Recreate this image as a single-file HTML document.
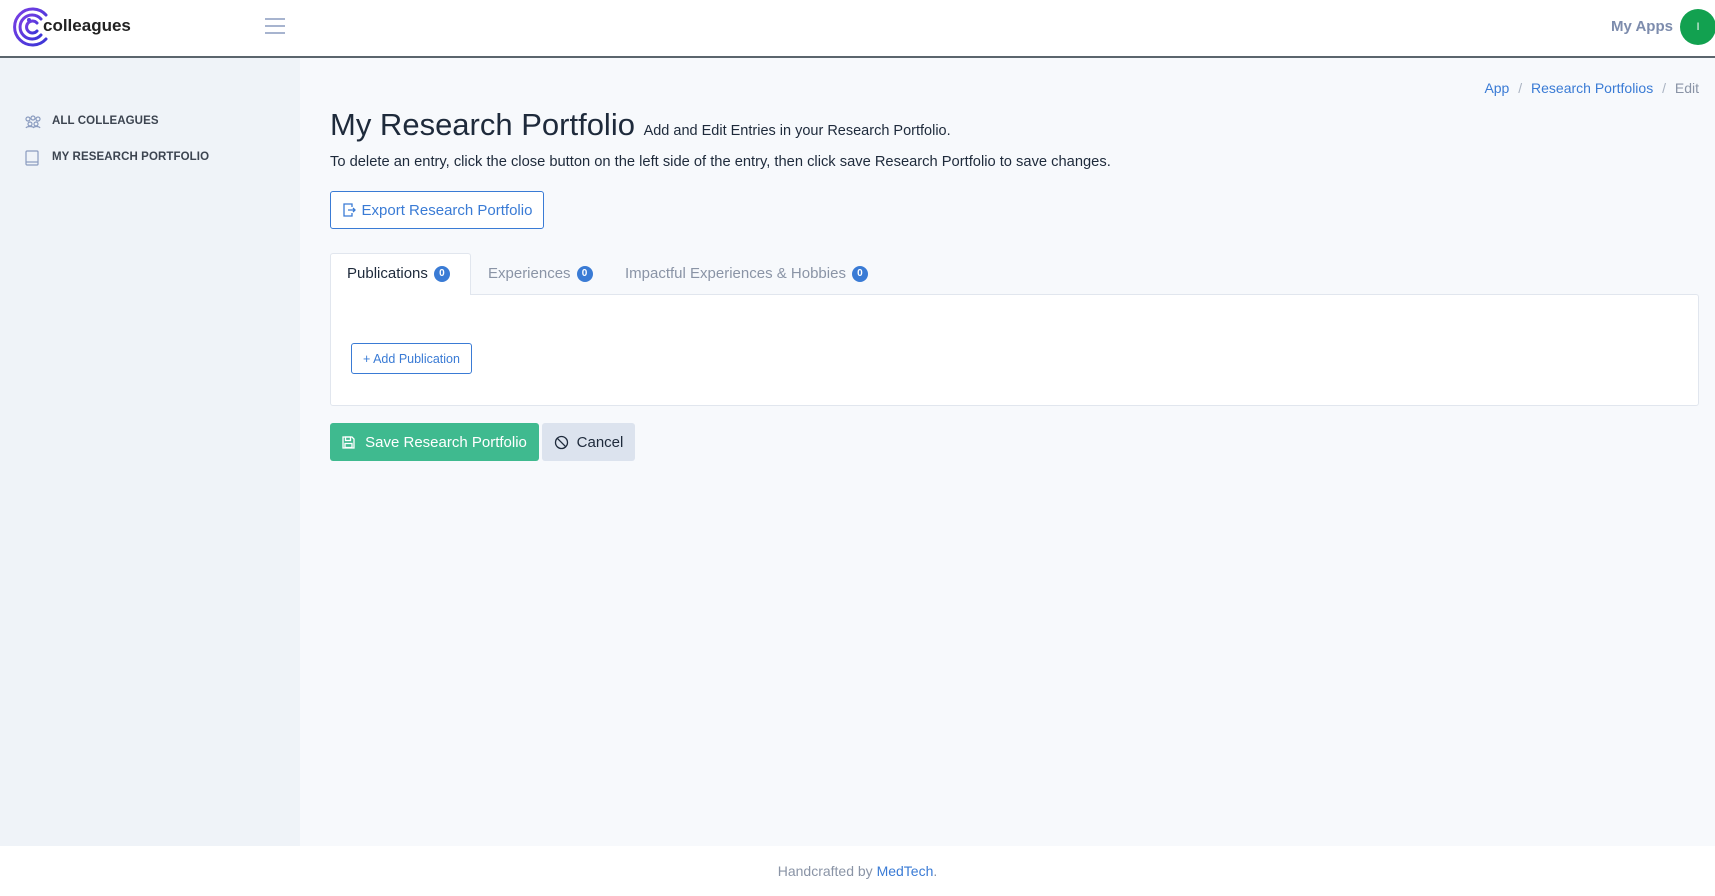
<!DOCTYPE html>
<html><head><meta charset="utf-8"><style>
*{box-sizing:border-box;margin:0;padding:0}
body{width:1715px;height:896px;overflow:hidden;font-family:"Liberation Sans",sans-serif;background:#f7f9fc;position:relative;color:#1e2a3b}
.hdr{position:absolute;left:0;top:0;width:1715px;height:58px;background:#fff;border-bottom:2px solid #5b656d}
.side{position:absolute;left:0;top:58px;width:300px;height:788px;background:#eff3f8}
.foot{position:absolute;left:0;top:846px;width:1715px;height:50px;background:#fff;text-align:center;font-size:14px;color:#8a94a6;line-height:50px}
.foot a{color:#3a7bd5;text-decoration:none}
.abs{position:absolute}
.nav{font-size:11.5px;font-weight:bold;color:#3c4450;letter-spacing:.1px}
.btn{position:absolute;border-radius:3px;font-size:15px;display:flex;align-items:center;justify-content:center}
.badge{display:inline-block;width:16px;height:16px;border-radius:8px;background:#3a7bd5;color:#fff;font-size:10px;font-weight:bold;text-align:center;line-height:16px;vertical-align:middle;margin-left:6px}
</style></head><body>
<div class="hdr">
<svg class="abs" style="left:12px;top:7px" width="40" height="40" viewBox="0 0 40 40" fill="none" stroke-width="3" stroke-linecap="round">
<defs><linearGradient id="g" x1="0" y1="0" x2="1" y2="1"><stop offset="0" stop-color="#7b3fe4"/><stop offset="1" stop-color="#3a35d6"/></linearGradient></defs>
<path d="M34 8A18 18 0 1 0 34 32" stroke="url(#g)"/><path d="M29 12A12 12 0 1 0 29 28" stroke="url(#g)"/><path d="M25 16A6 6 0 1 0 25 24" stroke="url(#g)"/>
<circle cx="17" cy="13" r="2" fill="#5a3ee0" stroke="none"/></svg>
<div class="abs" style="left:43px;top:16px;font-size:17px;font-weight:bold;color:#222">colleagues</div>
<svg class="abs" style="left:264px;top:17px" width="22" height="18"><g stroke="#8a9bbf" stroke-width="1.6"><line x1="1" y1="2" x2="21" y2="2"/><line x1="1" y1="9" x2="21" y2="9"/><line x1="1" y1="16" x2="21" y2="16"/></g></svg>
<div class="abs" style="left:1611px;top:18px;font-size:15px;font-weight:bold;color:#7d8cad">My Apps</div>
<div class="abs" style="left:1680px;top:9px;width:36px;height:36px;border-radius:18px;background:#12a150;color:#fff;font-size:11px;text-align:center;line-height:36px">I</div>
</div>
<div class="side">
<svg class="abs" style="left:24px;top:57px" width="18" height="14" fill="none" stroke="#8a9bbf" stroke-width="1.2"><circle cx="4" cy="4" r="2"/><circle cx="9" cy="3" r="2"/><circle cx="14" cy="4" r="2"/><circle cx="6" cy="9" r="2"/><circle cx="12" cy="9" r="2"/><path d="M2 13c1-2 7-2 8 0M9 13c1-2 6-2 7 0"/></svg>
<div class="abs nav" style="left:52px;top:57px">ALL COLLEAGUES</div>
<svg class="abs" style="left:25px;top:92px" width="14" height="16" fill="none" stroke="#8a9bbf" stroke-width="1.2"><rect x="1" y="1" width="12" height="14" rx="1"/><line x1="1" y1="12" x2="13" y2="12"/></svg>
<div class="abs nav" style="left:52px;top:93px">MY RESEARCH PORTFOLIO</div>
</div>
<div class="abs" style="right:16px;top:80px;font-size:14px;color:#3a7bd5">App <span style="color:#aab3c2;margin:0 5px">/</span> Research Portfolios <span style="color:#aab3c2;margin:0 5px">/</span> <span style="color:#8a94a6">Edit</span></div>
<div class="abs" style="left:330px;top:107px;font-size:31px;color:#1e2a3b">My Research Portfolio <span style="font-size:14.5px">Add and Edit Entries in your Research Portfolio.</span></div>
<div class="abs" style="left:330px;top:154px;font-size:14.7px;color:#1e2a3b">To delete an entry, click the close button on the left side of the entry, then click save Research Portfolio to save changes.</div>
<div class="btn" style="left:330px;top:191px;width:214px;height:38px;border:1px solid #3a7bd5;color:#3a7bd5;background:#fff">
<svg width="14" height="14" style="margin-right:6px" fill="none" stroke="#3a7bd5" stroke-width="1.3"><path d="M10 4V1H2v12h8v-3M6 7h7M11 5l2 2-2 2"/></svg>Export Research Portfolio</div>
<div class="abs" style="left:330px;top:294px;width:1369px;height:112px;background:#fff;border:1px solid #e1e6ee;border-radius:0 3px 3px 3px"></div>
<div class="abs" style="left:330px;top:253px;width:141px;height:42px;background:#fff;border:1px solid #e1e6ee;border-bottom:none;border-radius:3px 3px 0 0"></div>
<div class="abs" style="left:347px;top:265px;font-size:15px;color:#1e2a3b">Publications<span class="badge">0</span></div>
<div class="abs" style="left:488px;top:265px;font-size:15px;color:#8a94a6">Experiences<span class="badge">0</span></div>
<div class="abs" style="left:625px;top:265px;font-size:15px;color:#8a94a6">Impactful Experiences &amp; Hobbies<span class="badge">0</span></div>
<div class="btn" style="left:351px;top:343px;width:121px;height:31px;border:1px solid #3a7bd5;color:#3a7bd5;background:#fff;font-size:12.5px">+ Add Publication</div>
<div class="btn" style="left:330px;top:423px;width:209px;height:38px;background:#3fba8f;color:#fff">
<svg width="13" height="13" style="margin-right:10px" fill="none" stroke="#fff" stroke-width="1.3"><path d="M1 1h9l2 2v9H1z"/><rect x="3.5" y="1" width="5" height="3.5"/><rect x="3" y="7.5" width="7" height="4"/></svg>Save Research Portfolio</div>
<div class="btn" style="left:542px;top:423px;width:93px;height:38px;background:#dce3ee;color:#1e2a3b">
<svg width="15" height="15" style="margin-right:8px" fill="none" stroke="#1e2a3b" stroke-width="1.3"><circle cx="7.5" cy="7.5" r="6"/><line x1="3.3" y1="3.3" x2="11.7" y2="11.7"/></svg>Cancel</div>
<div class="foot">Handcrafted by <a>MedTech</a>.</div>
</body></html>
